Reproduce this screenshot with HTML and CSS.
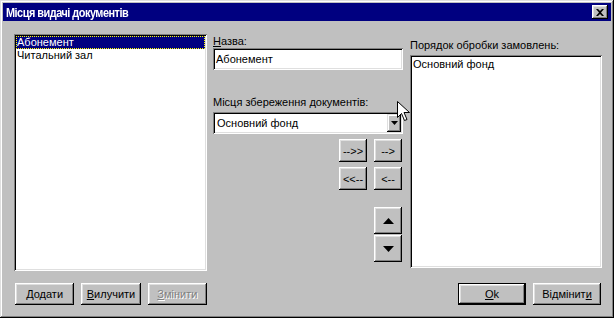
FILE: index.html
```html
<!DOCTYPE html>
<html lang="uk">
<head>
    <meta charset="UTF-8">
    <title>Місця видачі документів</title>
    <link rel="stylesheet" href="styles.css">
</head>
<body>
    <div class="window">
        <div class="title-bar">
            <span class="title">Місця видачі документів</span>
            <button class="close-btn">
                <svg width="8" height="7" viewBox="0 0 8 7"><path d="M0 0h2l2 2 2-2h2L5 3.5 8 7H6L4 5 2 7H0l3-3.5z" fill="#000"/></svg>
            </button>
        </div>
        <div class="dialog">
            <div class="left-col">
                <div class="listbox">
                    <div class="list-item selected">Абонемент</div>
                    <div class="list-item">Читальний зал</div>
                </div>
            </div>

            <div class="middle-col">
                <label class="field-label"><u>Н</u>азва:</label>
                <div class="textbox">Абонемент</div>

                <label class="field-label store-label">Місця збереження документів:</label>
                <div class="combo">
                    <span class="combo-text">Основний фонд</span>
                    <span class="combo-btn">
                        <svg width="7" height="4" viewBox="0 0 7 4"><path d="M0 0h7L3.5 4z" fill="#000"/></svg>
                    </span>
                </div>

                <div class="move-row">
                    <button class="btn small">--&gt;&gt;</button>
                    <button class="btn small">--&gt;</button>
                </div>
                <div class="move-row">
                    <button class="btn small">&lt;&lt;--</button>
                    <button class="btn small">&lt;--</button>
                </div>

                <div class="order-btns">
                    <button class="btn arrow">
                        <svg width="11" height="6" viewBox="0 0 11 6"><path d="M5.5 0L11 6H0z" fill="#000"/></svg>
                    </button>
                    <button class="btn arrow">
                        <svg width="11" height="6" viewBox="0 0 11 6"><path d="M0 0h11L5.5 6z" fill="#000"/></svg>
                    </button>
                </div>
            </div>

            <div class="right-col">
                <label class="field-label order-label">Порядок обробки замовлень:</label>
                <div class="listbox order-list">
                    <div class="list-item">Основний фонд</div>
                </div>
            </div>

            <div class="left-buttons">
                <button class="btn wide"><u>Д</u>одати</button>
                <button class="btn wide"><u>В</u>илучити</button>
                <button class="btn wide disabled"><u>З</u>мінити</button>
            </div>
            <div class="right-buttons">
                <button class="btn wide default"><u>O</u>k</button>
                <button class="btn wide">Відмінит<u>и</u></button>
            </div>
        </div>

        <svg class="cursor" width="13" height="21" viewBox="0 0 13 21">
            <path d="M0.5 0.5v16l4-4 3 7 2.5-1-3-7h5.5z" fill="#fff" stroke="#000" stroke-width="1"/>
        </svg>
    </div>
</body>
</html>
```

FILE: styles.css
```css
body {
    margin: 0;
    background-color: #c0c0c0;
    font-family: "Liberation Sans", Arial, sans-serif;
    font-size: 11px;
    color: #000;
}
.window {
    position: relative;
    width: 614px;
    height: 318px;
    box-sizing: border-box;
    padding: 3px;
    background-color: #c0c0c0;
    box-shadow: inset -1px -1px #000, inset 1px 1px #dfdfdf, inset -2px -2px #808080, inset 2px 2px #fff;
}
.title-bar {
    display: flex;
    align-items: center;
    justify-content: space-between;
    height: 18px;
    padding: 0 3px;
    background-color: #000080;
}
.title {
    color: #fff;
    font-weight: bold;
    font-size: 13px;
    letter-spacing: -0.6px;
    transform: scaleX(0.84);
    transform-origin: left center;
}
.close-btn {
    width: 16px;
    height: 14px;
    padding: 0;
    border: none;
    background-color: #c0c0c0;
    display: flex;
    align-items: center;
    justify-content: center;
    box-shadow: inset -1px -1px #000, inset 1px 1px #fff, inset -2px -2px #808080, inset 2px 2px #dfdfdf;
}
.dialog {
    display: grid;
    grid-template-columns: 193px 190px 193px;
    grid-template-rows: 237px 22px;
    column-gap: 6px;
    row-gap: 12px;
    padding: 13px 0 0 11px;
}
.listbox {
    height: 100%;
    box-sizing: border-box;
    padding: 2px;
    background-color: #fff;
    box-shadow: inset 1px 1px #808080, inset -1px -1px #fff, inset 2px 2px #000, inset -2px -2px #dfdfdf;
}
.list-item {
    height: 13px;
    line-height: 13px;
    padding-left: 1px;
    white-space: nowrap;
}
.list-item.selected {
    background-color: #000080;
    color: #fff;
    outline: 1px dotted #ffff00;
    outline-offset: -1px;
}
.middle-col {
    display: flex;
    flex-direction: column;
}
.field-label {
    display: block;
    height: 14px;
    line-height: 14px;
}
.textbox {
    height: 22px;
    line-height: 22px;
    box-sizing: border-box;
    padding-left: 3px;
    background-color: #fff;
    box-shadow: inset 1px 1px #808080, inset -1px -1px #fff, inset 2px 2px #000, inset -2px -2px #dfdfdf;
}
.store-label {
    margin-top: 25px;
    margin-bottom: 3px;
}
.combo {
    display: flex;
    align-items: center;
    justify-content: space-between;
    height: 22px;
    box-sizing: border-box;
    padding: 2px 2px 2px 4px;
    background-color: #fff;
    box-shadow: inset 1px 1px #808080, inset -1px -1px #fff, inset 2px 2px #000, inset -2px -2px #dfdfdf;
}
.combo-btn {
    width: 14px;
    height: 18px;
    display: flex;
    align-items: center;
    justify-content: center;
    background-color: #c0c0c0;
    box-shadow: inset -1px -1px #000, inset 1px 1px #dfdfdf, inset -2px -2px #808080, inset 2px 2px #fff;
}
.btn {
    padding: 0;
    border: none;
    background-color: #c0c0c0;
    font-family: "Liberation Sans", Arial, sans-serif;
    font-size: 11px;
    color: #000;
    display: flex;
    align-items: center;
    justify-content: center;
    box-shadow: inset -1px -1px #000, inset 1px 1px #fff, inset -2px -2px #808080, inset 2px 2px #dfdfdf;
}
.move-row {
    display: flex;
    justify-content: flex-end;
    gap: 7px;
    margin-top: 5px;
    padding-right: 1px;
}
.move-row:first-of-type {
    margin-top: 10px;
}
.btn.small {
    width: 28px;
    height: 23px;
}
.order-btns {
    display: flex;
    flex-direction: column;
    align-items: flex-end;
    gap: 1px;
    margin-top: 17px;
    padding-right: 1px;
}
.btn.arrow {
    width: 28px;
    height: 27px;
}
.right-col {
    display: flex;
    flex-direction: column;
    padding-left: 1px;
}
.order-label {
    margin-top: 4px;
    margin-bottom: 3px;
}
.order-list {
    height: 213px;
    padding: 3px 2px;
}
.left-buttons {
    display: flex;
    gap: 7px;
    padding-left: 1px;
}
.right-buttons {
    grid-column: 3;
    display: flex;
    justify-content: flex-end;
    gap: 7px;
    padding-right: 1px;
}
.btn.wide {
    width: 60px;
    height: 22px;
}
.right-buttons .btn.wide {
    width: 68px;
}
.btn.default {
    box-shadow: inset 0 0 0 1px #000, inset -2px -2px #000, inset 2px 2px #fff, inset -3px -3px #808080, inset 3px 3px #dfdfdf;
}
.btn.disabled {
    color: #808080;
    text-shadow: 1px 1px #fff;
}
.cursor {
    position: absolute;
    left: 397px;
    top: 101px;
}
```
